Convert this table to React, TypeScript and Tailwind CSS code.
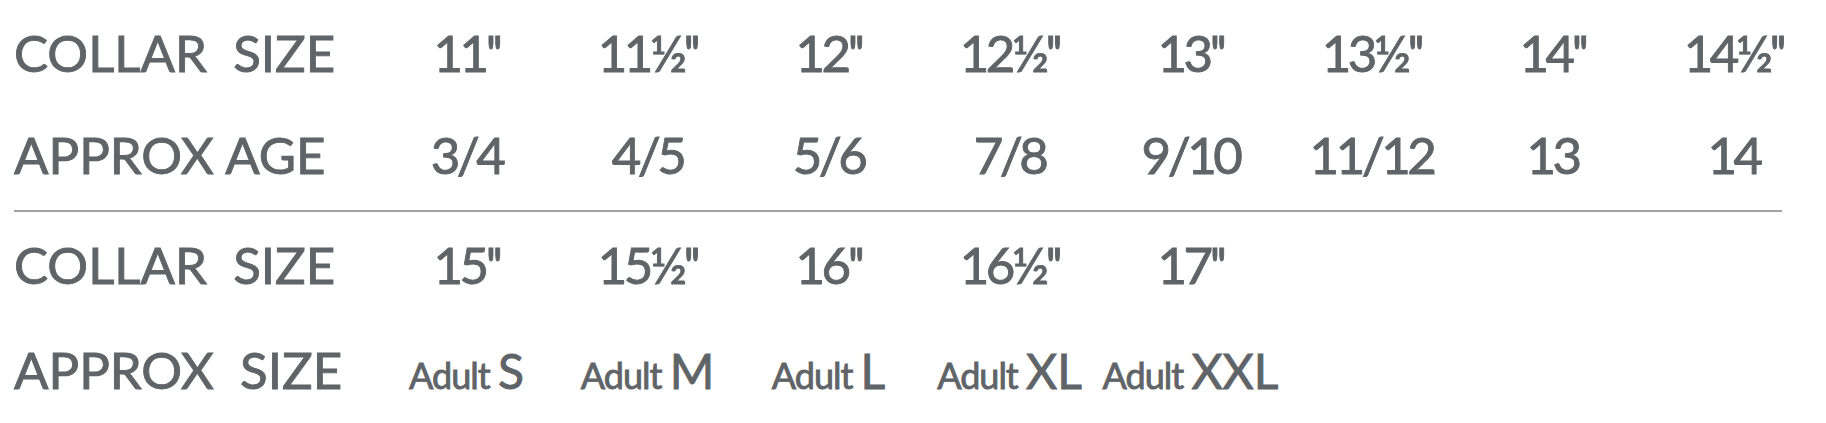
import React from 'react';

const topRows = [
  { label: 'COLLAR\u00a0 SIZE', values: ['11\'\'', '11½\'\'', '12\'\'', '12½\'\'', '13\'\'', '13½\'\'', '14\'\'', '14½\'\''] },
  { label: 'APPROX AGE', values: ['3/4', '4/5', '5/6', '7/8', '9/10', '11/12', '13', '14'] },
];

const collarAdult = ['15\'\'', '15½\'\'', '16\'\'', '16½\'\'', '17\'\''];
const adultSizes = ['S', 'M', 'L', 'XL', 'XXL'];

const Row: React.FC<{ label: string; children: React.ReactNode }> = ({ label, children }) => (
  <div className="flex items-baseline h-[51px]">
    <div className="w-[362px] shrink-0 whitespace-pre">{label}</div>
    <div className="grid grid-cols-[repeat(8,181px)] items-baseline">{children}</div>
  </div>
);

export default function App() {
  return (
    <div
      className="w-[1826px] h-[423px] overflow-hidden bg-white text-[#5f6468] text-[51px] leading-none [-webkit-text-stroke:0.9px_#5f6468] pl-[14px] pt-[27px]"
      style={{ fontFamily: 'Lato, "Liberation Sans", sans-serif' }}
    >
      {/* Children sizes */}
      <div className="flex flex-col gap-[51px]">
        {topRows.map((row) => (
          <Row key={row.label} label={row.label}>
            {row.values.map((v) => (
              <div key={v} className="text-center tracking-[-3.5px]">{v}</div>
            ))}
          </Row>
        ))}
      </div>

      <div className="w-[1768px] h-[2px] bg-[#a3a3a3] mt-[30px]" />

      {/* Adult sizes */}
      <div className="flex flex-col gap-[54px] mt-[27px]">
        <Row label={'COLLAR\u00a0 SIZE'}>
          {collarAdult.map((v) => (
            <div key={v} className="text-center tracking-[-3.5px]">{v}</div>
          ))}
        </Row>
        <Row label={'APPROX\u00a0 SIZE'}>
          {adultSizes.map((s) => (
            <div key={s} className="text-center whitespace-nowrap">
              <span className="text-[36px] tracking-[-1px]">Adult </span>
              <span className="text-[48px]">{s}</span>
            </div>
          ))}
        </Row>
      </div>
    </div>
  );
}
